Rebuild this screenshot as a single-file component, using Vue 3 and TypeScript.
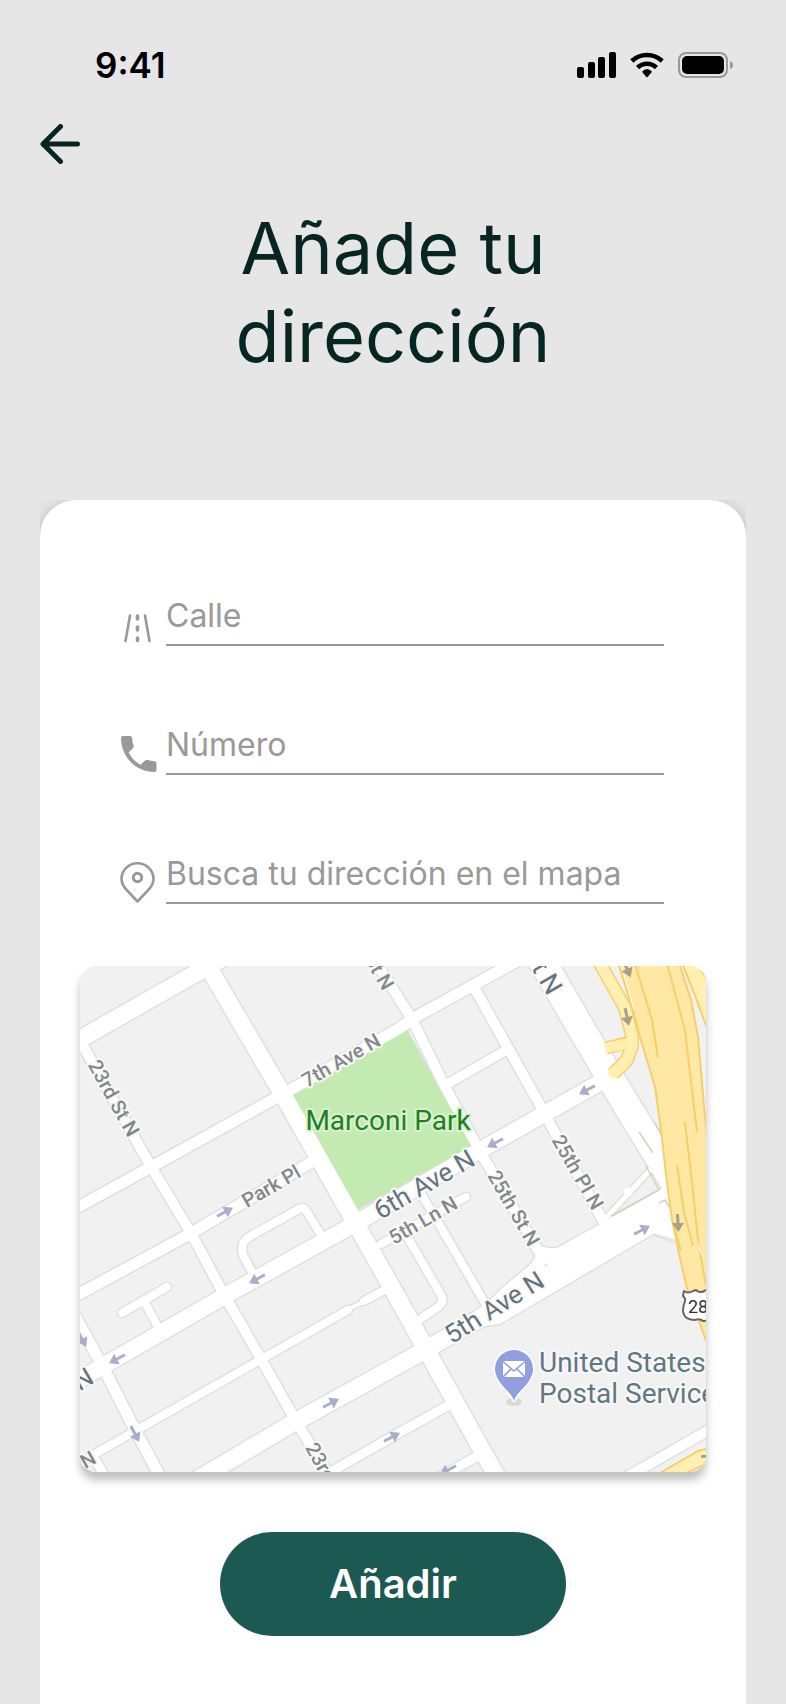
<script setup lang="ts">
import { ref } from 'vue'

interface Road {
  d: string
  width: number
}

interface Arrow {
  x: number
  y: number
  angle: number
  tone: 'street' | 'highway'
}

interface Label {
  text: string
  x: number
  y: number
  angle: number
  kind: 'minor' | 'major'
  anchor: 'start' | 'middle' | 'end'
}

const street = ref('')
const phone = ref('')
const search = ref('')

const roads: Road[] = [
  { d: 'M-10 79L9 68L125 2L160 -18', width: 17 },
  { d: 'M118 -18L130 4L202 127L311 320L403 486L420 516', width: 17 },
  { d: 'M-10 245L0 240L71 201L194 133L210 124L320 62L332 53L446 -10', width: 11 },
  { d: 'M-6 64L70 199L111 267L143 327L180 391L213 450L253 517', width: 10 },
  { d: 'M-10 333L108 269L230 197', width: 11 },
  { d: 'M-10 419L23 400L143 331L273 259L397 186L528 112', width: 16 },
  { d: 'M110 518L213 457L320 398L345 384L380 364', width: 17 },
  { d: 'M455 -17L529 110L563 166L600 226', width: 27 },
  { d: 'M290 -13L332 53L363 117L397 180L405 194L459 286', width: 10 },
  { d: 'M395 23L460 139L469 156L523 255', width: 10 },
  { d: 'M369 117L423 86', width: 9 },
  { d: 'M172 306L163 289Q160 276 169 271L219 243Q224 240 227 246L241 269', width: 8 },
  { d: 'M42 347L87 321M64 335L78 361', width: 8 },
  { d: 'M-10 502L13 489L180 394L268 344M284 335L310 321', width: 8 },
  { d: 'M264 345L290 333', width: 4 },
  { d: 'M-10 341L23 401L53 460L83 516', width: 11 },
  { d: 'M13 490L28 516', width: 9 },
  { d: 'M235 515L310 472L369 439', width: 9 },
  { d: 'M350 516L398 490', width: 9 },
  { d: 'M540 515L636 460', width: 10 },
  { d: 'M301 278L386 231', width: 8 },
  { d: 'M342 229L405 337', width: 8 },
  { d: 'M328 272L361 329Q365 335 358 341L336 356', width: 8 },
  { d: 'M528 250L570 204', width: 5 },
]

const widening =
  'M345 375L400 342L411 333L420 324L452 297L456 289L459 280L469 282L477 282L522 257L580 224L605 200V280L573 268L420 358L405 360L350 390Z'

const arrows: Arrow[] = [
  { x: 145, y: 246, angle: -28, tone: 'street' },
  { x: 507, y: 124, angle: 152, tone: 'street' },
  { x: 415, y: 177, angle: 152, tone: 'street' },
  { x: 177, y: 313, angle: 152, tone: 'street' },
  { x: 37, y: 393, angle: 152, tone: 'street' },
  { x: 2, y: 373, angle: 62, tone: 'street' },
  { x: 55, y: 468, angle: 62, tone: 'street' },
  { x: 251, y: 437, angle: -28, tone: 'street' },
  { x: 312, y: 471, angle: -28, tone: 'street' },
  { x: 562, y: 264, angle: -28, tone: 'street' },
  { x: 368, y: 504, angle: 152, tone: 'street' },
  { x: 598, y: 257, angle: 87, tone: 'highway' },
  { x: 547, y: 3, angle: 66, tone: 'highway' },
  { x: 547, y: 51, angle: 78, tone: 'highway' },
  { x: 630, y: 490, angle: -4, tone: 'highway' },
]

const labels: Label[] = [
  { text: '23rd St N', x: 34, y: 132, angle: 61, kind: 'minor', anchor: 'middle' },
  { text: 'Park Pl', x: 191, y: 220, angle: -30, kind: 'minor', anchor: 'middle' },
  { text: '7th Ave N', x: 261, y: 94, angle: -30, kind: 'minor', anchor: 'middle' },
  { text: '25th St N', x: 309, y: 22, angle: 60, kind: 'minor', anchor: 'end' },
  { text: '26th St N', x: 476, y: 26, angle: 60, kind: 'major', anchor: 'end' },
  { text: '6th Ave N', x: 344, y: 218, angle: -30, kind: 'major', anchor: 'middle' },
  { text: '5th Ln N', x: 343, y: 254, angle: -30, kind: 'minor', anchor: 'middle' },
  { text: '25th St N', x: 434, y: 242, angle: 60, kind: 'minor', anchor: 'middle' },
  { text: '25th Pl N', x: 498, y: 206, angle: 60, kind: 'minor', anchor: 'middle' },
  { text: '5th Ave N', x: 414, y: 341, angle: -32, kind: 'major', anchor: 'middle' },
  { text: '23rd St N', x: 231, y: 478, angle: 61, kind: 'minor', anchor: 'start' },
  { text: '6th Ave N', x: 11, y: 408, angle: -30, kind: 'major', anchor: 'end' },
  { text: '5th Ln N', x: 14, y: 490, angle: -30, kind: 'minor', anchor: 'end' },
]
</script>

<template>
  <div class="screen">
    <header class="status">
      <span class="time">9:41</span>
      <svg class="indicators" viewBox="0 0 156 26" aria-hidden="true">
        <rect x="0" y="15" width="7" height="11" rx="2" />
        <rect x="11" y="10" width="7" height="16" rx="2" />
        <rect x="21" y="5" width="7" height="21" rx="2" />
        <rect x="32" y="0" width="7" height="26" rx="2" />
        <g transform="translate(53 0)">
          <path d="M1.8 9A22.4 22.4 0 0 1 32.2 9" fill="none" stroke="#000" stroke-width="4.6" />
          <path d="M7.6 15.6A13.4 13.4 0 0 1 26.4 15.6" fill="none" stroke="#000" stroke-width="4.6" />
          <path d="M12 19.8Q17 14.4 22 19.8L17.6 25Q17 25.6 16.4 25Z" />
        </g>
        <rect x="102" y="1" width="48" height="24" rx="7" fill="none" stroke="#999" stroke-width="2" />
        <rect x="105" y="4" width="42" height="18" rx="5" />
        <path d="M153 9Q156 10 156 13Q156 16 153 17Z" fill="#999" />
      </svg>
    </header>

    <nav class="nav">
      <button class="back" type="button" aria-label="Volver">
        <svg viewBox="0 0 40 40" aria-hidden="true">
          <path
            d="M20.500 2.500L3 20L20.500 37.500M3 20H37.500"
            fill="none"
            stroke="#072522"
            stroke-width="5"
            stroke-linecap="round"
            stroke-linejoin="round"
          />
        </svg>
      </button>
    </nav>

    <h1 class="title">Añade tu dirección</h1>

    <main class="sheet">
      <form class="card" @submit.prevent>
        <div class="fields">
          <div class="field">
            <label for="street" aria-label="Calle">
              <svg viewBox="0 0 36 44" aria-hidden="true">
                <g fill="none" stroke="#999" stroke-linecap="round">
                  <path d="M10 13.500L5.500 39" stroke-width="2.600" />
                  <path d="M25 13.500L29.500 39" stroke-width="2.600" />
                  <path d="M17.500 14V17M17.500 25V28M17.500 36V38.500" stroke-width="3.600" />
                </g>
              </svg>
            </label>
            <input id="street" v-model="street" type="text" placeholder="Calle" />
          </div>
          <div class="field">
            <label for="phone" aria-label="Número">
              <svg viewBox="0 0 36 44" aria-hidden="true">
                <path
                  fill="#999"
                  d="M3 5H10Q12 5 12.200 7Q12.300 11 13.500 14.500Q14 16 12.800 17.200L8.700 21.500C11.700 27.300 15.500 31 20.500 33.800L24.800 29.700Q26 28.700 27.500 29.100Q31 30.200 34.500 30.300Q36.500 30.400 36.500 32.300V39Q36.500 41 34.500 41C16 41 1 26 1 7Q1 5 3 5Z"
                />
              </svg>
            </label>
            <input id="phone" v-model="phone" type="text" placeholder="Número" />
          </div>
          <div class="field">
            <label for="search" aria-label="Busca tu dirección en el mapa">
              <svg viewBox="0 0 36 44" aria-hidden="true">
                <g fill="none" stroke="#999" stroke-width="2.600" stroke-linejoin="round">
                  <path d="M17.500 41.500L6.300 29.500C3 26 1.500 23 1.500 19A16 15.800 0 0 1 33.500 19C33.500 23 32 26 28.700 29.500Z" />
                  <circle cx="17.500" cy="17.500" r="4.200" stroke-width="3" />
                </g>
              </svg>
            </label>
            <input id="search" v-model="search" type="text" placeholder="Busca tu dirección en el mapa" />
          </div>
        </div>

        <div class="map">
          <svg viewBox="0 0 626 506" role="img" aria-label="Mapa de Marconi Park">
            <rect width="626" height="506" fill="#f1f1f1" />

            <g fill="none" stroke="#e0e0e0" stroke-linecap="round" stroke-linejoin="round">
              <path v-for="(road, i) in roads" :key="i" :d="road.d" :stroke-width="road.width + 3" />
              <path :d="widening" stroke-width="3" />
            </g>
            <path d="M213 129L327 64L392 180L277 244Z" fill="#c3ebb1" stroke="#dcdfd8" stroke-width="1" />
            <g fill="none" stroke="#fff" stroke-linecap="round" stroke-linejoin="round">
              <path v-for="(road, i) in roads" :key="i" :d="road.d" :stroke-width="road.width" />
            </g>
            <path :d="widening" fill="#fff" />
            <path d="M573 268L600 276" stroke="#e0e0e0" stroke-width="1.500" />
            <circle cx="548" cy="226" r="4.500" fill="#fff" />
            <path d="M463 301L467 297V300Z" fill="#ddd" />
            <path
              d="M559 166L573 187M566 200L579 224L531 250M575 157L582 170M579 237L585 234L590 242"
              fill="none"
              stroke="#d4cec7"
              stroke-width="1.500"
            />

            <!-- Ramps and highway -->
            <g fill="none" stroke-linejoin="round">
              <path d="M526 82L550 76" stroke="#f5cf6b" stroke-width="13" />
              <path d="M518 -6L545 42L552 70L552 80L547 94L533 108" stroke="#f5cf6b" stroke-width="14" />
              <path d="M525 82L550 77" stroke="#ffefb0" stroke-width="10" />
              <path
                d="M518 -6L545 42L552 70L552 80L547 94L534 107"
                stroke="#ffefb0"
                stroke-width="11"
                stroke-linecap="round"
              />
            </g>
            <g fill="#ffe8a3" stroke="#f5cf6b" stroke-width="2" stroke-linejoin="round">
              <path
                d="M538 -3L553 44L560 71L575 121L581 164L587 217L592 254L597 277L599 288L607 322L630 385V200L624 140L618 71L611 34L599 -3Z"
              />
              <path d="M602 -3L614 27L630 70V18L617 -3Z" fill="#ffefb0" />
              <path d="M580 507L618 485L630 482V496L607 507Z" fill="#ffefb0" />
            </g>
            <g fill="none" stroke="#f5cf6b" stroke-width="2">
              <path d="M555 -2L572 54L578 92" />
              <path d="M587 -2L605 64L612 124L617 166" />
              <path d="M605 156L613 226L618 274L626 320" />
              <path d="M597 199L604 246L613 280" />
              <path d="M593 256L601 285" />
            </g>
            <path d="M541 -2L554 44" stroke="#fff" stroke-width="1" />
            <path d="M618 274L622 290L619 284Z" fill="#fff" />

            <g
              v-for="(arrow, i) in arrows"
              :key="i"
              :class="arrow.tone"
              :transform="`translate(${arrow.x} ${arrow.y}) rotate(${arrow.angle})`"
            >
              <path d="M-9 -1.500H0V-6L9 0L0 6V1.500H-9Z" />
            </g>

            <g class="names">
              <text
                v-for="(label, i) in labels"
                :key="i"
                :class="label.kind"
                :text-anchor="label.anchor"
                dy="0.36em"
                :transform="`translate(${label.x} ${label.y}) rotate(${label.angle})`"
              >{{ label.text }}</text>
              <text class="park" x="308" y="164" text-anchor="middle">Marconi Park</text>
              <text class="place" x="459" y="406">United States</text>
              <text class="place" x="459" y="437">Postal Service</text>
            </g>

            <!-- Post office pin -->
            <ellipse cx="434" cy="436" rx="8" ry="4" fill="#d9d9d9" />
            <path
              d="M434 436C433 426 415 418 415 403A19 19 0 0 1 453 403C453 418 435 426 434 436Z"
              fill="#919fe0"
              stroke="#fff"
              stroke-width="3"
              paint-order="stroke"
            />
            <rect x="423" y="395" width="22" height="16" fill="#fff" />
            <path
              d="M423 395.500L434 405L445 395.500M423 411L431 403M445 411L437 403"
              fill="none"
              stroke="#919fe0"
              stroke-width="1.600"
            />

            <!-- Route shield -->
            <path
              d="M604 325Q608 328 613 325L616 324Q620 328 626 324L632 326V354L623 355Q620 352 615 354Q604 354 603 345Q603 340 605 335Q606 333 603 330Z"
              fill="#fff"
              stroke="#666"
              stroke-width="2"
              stroke-linejoin="round"
            />
            <text class="route" x="608" y="347">28</text>
          </svg>
        </div>

        <button class="submit" type="submit">Añadir</button>
      </form>
    </main>
  </div>
</template>

<style>
body {
  background: #e6e6e6;
}
</style>

<style scoped>
.screen {
  box-sizing: border-box;
  display: flex;
  flex-direction: column;
  min-height: 100vh;
  padding: 46px 40px 0;
  background: #e6e6e6;
  font-family: Inter, 'Liberation Sans', sans-serif;
}

.status {
  display: flex;
  align-items: center;
  justify-content: space-between;
  height: 38px;
  padding: 0 13px 0 55px;
}

.time {
  font-size: 35px;
  font-weight: 600;
  line-height: 40px;
  color: #000;
}

.indicators {
  width: 156px;
  height: 26px;
}

.nav {
  display: flex;
  padding-top: 40px;
}

.back {
  width: 40px;
  height: 40px;
  padding: 0;
  border: 0;
  background: none;
  cursor: pointer;
}

.back svg {
  display: block;
}

.title {
  max-width: 400px;
  margin: 40px auto 0;
  font-size: 72px;
  font-weight: 400;
  line-height: 88px;
  text-align: center;
  color: #072522;
}

.sheet {
  display: flex;
  flex: 1;
  margin-top: 120px;
  overflow: hidden;
}

.card {
  display: flex;
  flex: 1;
  flex-direction: column;
  align-items: center;
  min-width: 0;
  padding: 95px 40px 68px;
  border-radius: 36px 36px 0 0;
  background: #fff;
  box-shadow: 0 4px 16px rgba(0, 0, 0, 0.25);
}

.fields {
  display: flex;
  flex-direction: column;
  gap: 78px;
  align-self: stretch;
  padding: 0 42px 0 40px;
}

.field {
  display: flex;
  align-items: flex-end;
  gap: 10px;
}

.field label {
  flex: none;
  width: 36px;
  height: 44px;
}

.field svg {
  display: block;
  overflow: visible;
}

.field input {
  flex: 1;
  min-width: 0;
  height: 41px;
  padding: 0 0 8px;
  border: 0;
  border-bottom: 2px solid #999;
  border-radius: 0;
  outline: none;
  background: none;
  font-family: inherit;
  font-size: 32px;
  font-weight: 400;
  line-height: 40px;
  color: #072522;
}

.field input::placeholder {
  color: #999;
  opacity: 1;
}

.map {
  align-self: stretch;
  margin-top: 62px;
  border-radius: 16px;
  overflow: hidden;
  box-shadow: 0 8px 8px rgba(0, 0, 0, 0.25);
}

.map svg {
  display: block;
  width: 100%;
}

.street {
  fill: #a9aecb;
}

.highway {
  fill: #a8a189;
}

.names text {
  font-family: Roboto, sans-serif;
  stroke: #f8f8f8;
  stroke-width: 4px;
  stroke-linejoin: round;
  paint-order: stroke;
}

.names .minor {
  font-size: 20px;
  font-weight: 500;
  fill: #82888a;
}

.names .major {
  font-size: 26px;
  fill: #64737a;
}

.names .park {
  font-size: 28px;
  fill: #1f7f24;
  stroke: #d9f2ce;
}

.names .place {
  font-size: 28px;
  fill: #5f7884;
}

.route {
  font-family: Roboto, sans-serif;
  font-size: 18px;
  fill: #333;
}

.submit {
  width: 346px;
  max-width: 100%;
  height: 104px;
  margin-top: 60px;
  padding: 0;
  border: 0;
  border-radius: 52px;
  background: #1c5953;
  font-family: inherit;
  font-size: 40px;
  font-weight: 600;
  line-height: 48px;
  color: #fff;
  cursor: pointer;
}
</style>
